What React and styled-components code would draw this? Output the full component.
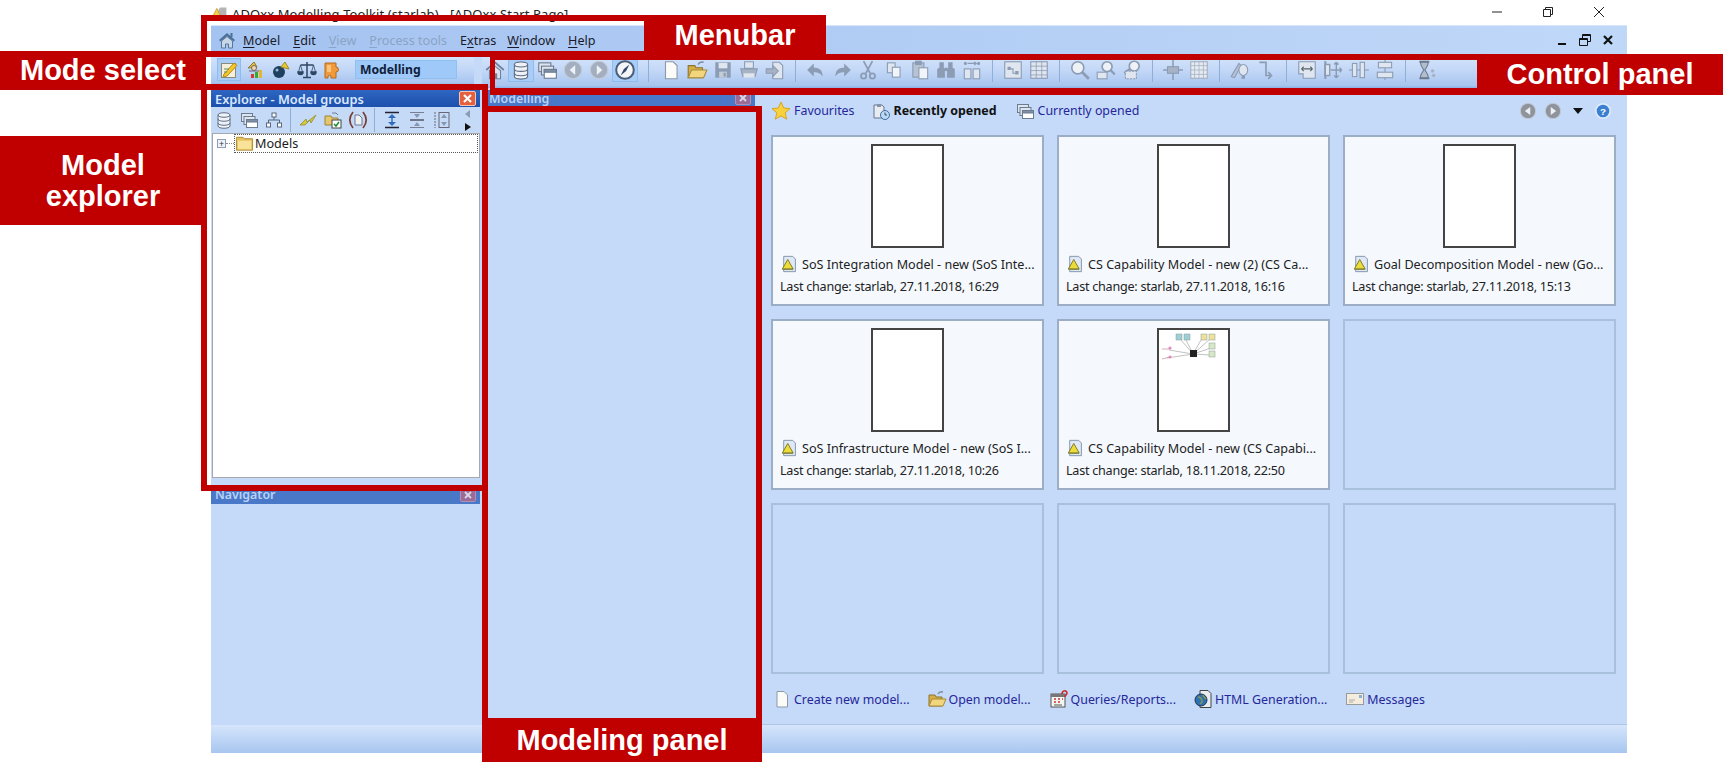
import React from "react";
import styled, { createGlobalStyle } from "styled-components";

const GlobalStyle = createGlobalStyle`
  html, body { margin: 0; padding: 0; background: #fff; }
  body { font-family: "Noto Sans", "Liberation Sans", sans-serif; font-size: 13px; }
`;

const RED = "#c00000";
const PANEL = "#c4daf8";

const Page = styled.div`
  position: relative;
  width: 1723px;
  height: 776px;
  overflow: hidden;
  background: #fff;
`;

const TitleBar = styled.div`
  height: 25px;
  display: flex;
  align-items: center;
  padding: 3px 0 0 212px;
  box-sizing: border-box;
`;

const TitleText = styled.span`
  margin-left: 4px;
  font-size: 13px;
  color: #222;
  letter-spacing: 0.1px;
`;

const WinControls = styled.div`
  margin-left: auto;
  display: flex;
  padding-right: 116px;
  gap: 35px;
`;

const WinGlyph = styled.svg`
  width: 16px;
  height: 16px;
  margin-top: -4px;
`;

const Window = styled.div`
  margin-left: 211px;
  width: 1416px;
  height: 728px;
  display: flex;
  flex-direction: column;
  background: ${PANEL};
`;

const MenuBar = styled.div`
  height: 32px;
  flex: none;
  display: flex;
  align-items: center;
  padding: 0 6px 3px 6px;
  box-sizing: border-box;
  background: linear-gradient(to right, #a5c3f1, #c0d8f8);
  border-top: 1px solid #d8e6fb;
`;

const MenuItem = styled.span`
  font-size: 12.6px;
  margin-left: ${(p) => p.$gap || 13}px;
  color: ${(p) => (p.$off ? "#8ba3c4" : "#1a1a2a")};
  u { text-underline-offset: 2px; }
`;

const MdiButtons = styled.div`
  margin-left: auto;
  display: flex;
  gap: 7px;
  padding-right: 5px;
`;

const ToolRow = styled.div`
  height: 33px;
  flex: none;
  display: flex;
  align-items: flex-start;
`;

const barFill = `linear-gradient(to bottom, #d2e2fa 0%, #c2d7f7 45%, #a8c5ef 92%, #8fb0e0 100%)`;

const ModeBar = styled.div`
  width: 263px;
  height: 28px;
  flex: none;
  display: flex;
  align-items: center;
  gap: 2px;
  padding: 0 0 3px 6px;
  box-sizing: border-box;
  background: ${barFill};
`;

const ControlBar = styled.div`
  margin-left: 8px;
  flex: 1;
  height: 31px;
  display: flex;
  align-items: center;
  padding-bottom: 5px;
  box-sizing: border-box;
  background: ${barFill};
`;

const ToolButton = styled.div`
  width: ${(p) => p.$w || 26}px;
  height: 23px;
  flex: none;
  display: flex;
  align-items: center;
  justify-content: center;
  box-sizing: border-box;
  background: ${(p) => (p.$active ? "#a9cdf6" : "transparent")};
  border: 1px solid ${(p) => (p.$active ? "#8dbdf0" : "transparent")};
`;

const Sep = styled.div`
  width: 1px;
  height: 24px;
  flex: none;
  margin: 0 ${(p) => p.$r ?? 7}px 0 ${(p) => p.$l ?? 7}px;
  background: #8fafd8;
`;

const ModeCombo = styled.div`
  margin-left: 8px;
  width: 102px;
  height: 19px;
  box-sizing: border-box;
  display: flex;
  align-items: center;
  padding-left: 4px;
  font-size: 12.2px;
  font-weight: 700;
  color: #10203a;
  background: #9fc9f8;
  border: 1px solid #8fc0ee;
`;

const Body = styled.div`
  flex: 1;
  min-height: 0;
  display: flex;
`;

const LeftColumn = styled.div`
  width: 269px;
  flex: none;
  display: flex;
  flex-direction: column;
`;

const PanelTitle = styled.div`
  height: ${(p) => p.$h || 16}px;
  flex: none;
  display: flex;
  align-items: center;
  justify-content: space-between;
  padding: 0 4px 0 ${(p) => p.$pl ?? 4}px;
  box-sizing: border-box;
  font-size: ${(p) => (p.$active ? 12.8 : 12.4)}px;
  font-weight: 600;
  background: ${(p) =>
    p.$active ? "linear-gradient(to bottom, #2e66c0, #1d50ad)" : "#4a78c8"};
  color: ${(p) => (p.$active ? "#d9e8ff" : "#b9d2f5")};
`;

const CloseBox = styled.div`
  width: ${(p) => (p.$active ? 17 : 16)}px;
  height: ${(p) => (p.$active ? 15 : 14)}px;
  display: flex;
  align-items: center;
  justify-content: center;
  border-radius: 2px;
  box-sizing: border-box;
  background: ${(p) => (p.$active ? "#e5603e" : "#9a6b97")};
  border: 1px solid ${(p) => (p.$active ? "#f5c7b6" : "#b38fb5")};
`;

const ExplorerTools = styled.div`
  height: 26px;
  flex: none;
  display: flex;
  align-items: center;
  background: #c5daf7;
`;

const OverflowArrows = styled.div`
  margin-left: 8px;
  width: 12px;
  display: flex;
  flex-direction: column;
  gap: 5px;
  align-items: center;
`;

const Tree = styled.div`
  height: 345px;
  flex: none;
  margin: 0 0 7px 1px;
  box-sizing: border-box;
  background: #fff;
  border: 1px solid #a6a8ad;
  padding: 0 1px 0 4px;
`;

const TreeRow = styled.div`
  display: flex;
  align-items: center;
  height: 19px;
`;

const TreeLine = styled.div`
  width: 8px;
  border-top: 1px dotted #888;
`;

const TreePlus = styled.div`
  width: 9px;
  height: 9px;
  flex: none;
  box-sizing: border-box;
  border: 1px solid #8d9bb5;
  font-size: 9px;
  line-height: 7px;
  text-align: center;
  color: #334;
  background: #eef2fa;
`;

const TreeLabel = styled.div`
  flex: 1;
  height: 19px;
  display: flex;
  align-items: center;
  gap: 1px;
  border: 1px dotted #555;
  box-sizing: border-box;
  font-size: 12.6px;
  color: #1a1a1a;
`;

const ModelColumn = styled.div`
  margin-left: 8px;
  width: 267px;
  flex: none;
`;

const StartPage = styled.div`
  margin-left: 5px;
  flex: 1;
  min-width: 0;
  display: flex;
  flex-direction: column;
  padding: 0 13px 0 11px;
`;

const TabRow = styled.div`
  height: 45px;
  flex: none;
  display: flex;
  align-items: center;
  padding-bottom: 4px;
  box-sizing: border-box;
`;

const Tab = styled.div`
  display: flex;
  align-items: center;
  gap: 3px;
  margin-left: ${(p) => p.$gap || 0}px;
  font-size: 12.4px;
  font-weight: ${(p) => (p.$on ? 700 : 400)};
  color: ${(p) => (p.$on ? "#111" : "#26269a")};
`;

const PagerTools = styled.div`
  margin-left: auto;
  display: flex;
  align-items: center;
  gap: 7px;
  padding-right: 2px;
`;

const PagerCaret = styled.svg`
  margin: 0 4px;
`;

const CardGrid = styled.div`
  display: grid;
  grid-template-columns: repeat(3, 273px);
  grid-auto-rows: 171px;
  column-gap: 13px;
  row-gap: 13px;
`;

const Card = styled.div`
  box-sizing: border-box;
  border: 2px solid ${(p) => (p.$empty ? "#a9c0dc" : "#9cadc6")};
  background: ${(p) => (p.$empty ? PANEL : "#f5f9fe")};
  display: flex;
  flex-direction: column;
  align-items: center;
  padding-top: 7px;
`;

const Thumb = styled.div`
  width: 73px;
  height: 104px;
  flex: none;
  box-sizing: border-box;
  border: 2px solid #444;
  background: #fff;
`;

const CardName = styled.div`
  align-self: stretch;
  display: flex;
  align-items: center;
  gap: 3px;
  margin-top: 8px;
  padding-left: 8px;
  height: 16px;
  font-size: 12.6px;
  color: #222;
  white-space: nowrap;
`;

const CardDate = styled.div`
  align-self: stretch;
  margin-top: 7px;
  padding-left: 7px;
  font-size: 12.6px;
  letter-spacing: -0.25px;
  line-height: 16px;
  color: #222;
  white-space: nowrap;
`;

const LinkRow = styled.div`
  flex: none;
  height: 52px;
  margin: 0 -13px 0 -11px;
  padding: 0 0 0 12px;
  box-sizing: border-box;
  display: flex;
  align-items: center;
  border-bottom: 2px solid #aec6e6;
`;

const FootLink = styled.div`
  display: flex;
  align-items: center;
  gap: 2px;
  margin-right: ${(p) => p.$mr}px;
  font-size: 12.4px;
  color: #26269a;
  white-space: nowrap;
`;

const StatusBar = styled.div`
  height: 28px;
  flex: none;
  background: linear-gradient(to bottom, #d5e5fb, #a8c6f0);
`;

/* annotations lying over the screenshot */
const MenubarFrame = styled.div`
  position: absolute;
  left: 201px;
  top: 15px;
  width: 450px;
  height: 42px;
  box-sizing: border-box;
  border: 6px solid ${RED};
`;

const ExplorerFrame = styled.div`
  position: absolute;
  left: 201px;
  top: 84px;
  width: 287px;
  height: 407px;
  box-sizing: border-box;
  border: 6px solid ${RED};
`;

const ControlFrame = styled.div`
  position: absolute;
  left: 490px;
  top: 54px;
  width: 995px;
  height: 41px;
  box-sizing: border-box;
  border: solid ${RED};
  border-width: 6px 6px 7px 5px;
`;

const ModelingFrame = styled.div`
  position: absolute;
  left: 482px;
  top: 106px;
  width: 280px;
  height: 620px;
  box-sizing: border-box;
  border: 6px solid ${RED};
`;

const Callout = styled.div`
  position: absolute;
  left: ${(p) => p.$x}px;
  top: ${(p) => p.$y}px;
  width: ${(p) => p.$w}px;
  height: ${(p) => p.$h}px;
  display: flex;
  align-items: center;
  justify-content: center;
  text-align: center;
  background: ${RED};
  color: #fff;
  font: 700 29px/31px "Liberation Sans", Arial, sans-serif;
`;

const G = "#8b9cb4";
const GL = "#dfe6f0";

const ICONS = {
  home: (
    <>
      <path d="M2 10 10 3l8 7-1.5 1.5L10 6l-6.5 5.5z" fill="#4c6f96" />
      <path d="M4.5 11 10 6.5l5.5 4.5v7h-4v-4h-3v4h-4z" fill="#c9d6e6" stroke="#55789e" />
      <rect x="13.5" y="3" width="2" height="4" fill="#4c6f96" />
    </>
  ),
  pencil: (
    <>
      <rect x="2.5" y="3.5" width="14" height="14" fill="#f6efdc" stroke="#8a8a78" />
      <path d="M5 14 15 3l3 2.5L8 16l-4 1z" fill="#f3c62c" stroke="#b78c18" />
      <path d="M5 9h5M5 12h3" stroke="#5b8f5b" />
    </>
  ),
  chartHat: (
    <>
      <path d="M3 8 9 2l3 5z" fill="#e4c24a" stroke="#8e7a28" />
      <circle cx="9" cy="8" r="2.5" fill="#f0d9b5" stroke="#765" />
      <path d="M4 11h12" stroke="#667" />
      <rect x="6" y="14" width="3" height="4" fill="#d33" />
      <rect x="10" y="12" width="3" height="6" fill="#3a3" />
      <rect x="14" y="10" width="3" height="8" fill="#e3b72b" />
    </>
  ),
  ballTri: (
    <>
      <circle cx="8" cy="12" r="6" fill="#20405f" />
      <circle cx="6" cy="10" r="1.5" fill="#9db9d4" />
      <path d="M10 7 14 2l4 7z" fill="#e8c93a" stroke="#a08a20" />
    </>
  ),
  scale: (
    <g fill="none" stroke="#2e4763" strokeWidth="1.5">
      <path d="M10 2v15M6 17.5h8M3.5 5h13" />
      <path d="M1 12a2.5 2.5 0 0 0 5 0zM14 12a2.5 2.5 0 0 0 5 0z" fill="#2e4763" />
      <path d="M3.5 5 1.5 12M3.5 5l2 7M16.5 5l-2 7M16.5 5l2 7" strokeWidth="0.8" />
    </g>
  ),
  puzzle: (
    <>
      <path d="M2 3h11v4a2.5 2.5 0 0 1 0 5v6H8v-2a2 2 0 0 0-3 0v2H2z" fill="#f09a3a" stroke="#b66b1c" />
      <path d="M4 5h4v7H4z" fill="#f8c37b" />
    </>
  ),
  db: (
    <g fill="#eef2f7" stroke="#5f6f84">
      <path d="M4 5c0-3 12-3 12 0v11c0 3-12 3-12 0z" />
      <path d="M4 5c0 3 12 3 12 0M4 9c0 3 12 3 12 0M4 13c0 3 12 3 12 0" fill="none" />
    </g>
  ),
  stack: (
    <g stroke="#6c7b90" fill="#dde5ef">
      <rect x="2.5" y="3.5" width="11" height="8" />
      <rect x="5" y="6.5" width="11" height="8" />
      <rect x="7.5" y="9.5" width="11" height="8" fill="#fff" />
      <rect x="7.5" y="9.5" width="11" height="2.5" fill="#7d8ea6" />
    </g>
  ),
  org: (
    <g stroke="#56677f" fill="#fff">
      <rect x="8" y="3" width="4" height="4" />
      <rect x="2.5" y="13" width="4" height="4" />
      <rect x="13.5" y="13" width="4" height="4" />
      <path d="M10 7v3M4.5 13v-3h11v3" fill="none" />
    </g>
  ),
  zig: <path d="M2 15 8 9l1 3 9-7-5 8-1-3-5 5z" fill="#d7c83a" stroke="#8a8520" strokeWidth="0.7" />,
  folderCheck: (
    <>
      <path d="M2 6h6l1 2h6v7H2z" fill="#e6c66a" stroke="#9b8339" />
      <rect x="9" y="10" width="9" height="8" fill="#fff" stroke="#444" />
      <path d="M11 14l2 2 3-4" stroke="#1c8a2c" strokeWidth="1.5" fill="none" />
      <path d="M9 3h4l2 2" stroke="#6b7d93" fill="none" />
    </>
  ),
  parenDoc: (
    <>
      <path d="M5 2C1 7 1 13 5 18M15 2c4 5 4 11 0 16" stroke="#7a3b33" strokeWidth="1.7" fill="none" />
      <path d="M7 5h4l3 3v7H7z" fill="#eef1f5" stroke="#6b7788" />
    </>
  ),
  expand: (
    <g stroke="#223" fill="#2f6cc0">
      <path d="M3 2.5h14M3 17.5h14" fill="none" strokeWidth="1.5" />
      <path d="M10 4 6 8h8zM10 16l-4-4h8z" stroke="none" />
      <path d="M10 7v6" fill="none" stroke="#2f6cc0" strokeWidth="1.5" />
    </g>
  ),
  collapse: (
    <g stroke="#556" fill="#8696ad">
      <path d="M3 10h14" fill="none" strokeWidth="1.5" />
      <path d="M10 8 7 4h6zM10 12l-3 4h6z" stroke="none" />
      <path d="M3 2.5h14M3 17.5h14" fill="none" strokeWidth="0.7" />
    </g>
  ),
  level: (
    <g stroke="#667" fill="#8696ad">
      <path d="M3 2v16" strokeDasharray="2 1" fill="none" />
      <rect x="7" y="2.5" width="10" height="15" fill="none" />
      <path d="M12 4l-3 4h6zM12 16l-3-4h6z" stroke="none" />
    </g>
  ),
  homeGrey: (
    <>
      <path d="M2 10 10 3l8 7" fill="none" stroke="#6f829c" strokeWidth="1.6" />
      <path d="M5 10.5 10 6.5l5 4V18H5z" fill="#dbe3ee" stroke="#6f829c" />
      <rect x="9" y="13" width="3" height="5" fill="#6f829c" />
    </>
  ),
  back: (
    <>
      <circle cx="10" cy="10" r="8" fill="#a3afc0" stroke="#c3ccd9" />
      <path d="M12 5.5 7 10l5 4.5z" fill="#eef2f6" />
    </>
  ),
  fwd: (
    <>
      <circle cx="10" cy="10" r="8" fill="#a3afc0" stroke="#c3ccd9" />
      <path d="M8 5.5 13 10l-5 4.5z" fill="#eef2f6" />
    </>
  ),
  compass: (
    <>
      <circle cx="10" cy="10" r="8" fill="#f3f5f8" stroke="#4a5d78" strokeWidth="1.8" />
      <path d="M14 5 11 11l-5 4 3-6z" fill="#31486a" />
    </>
  ),
  doc: <path d="M5 2.5h7l3.5 3.5v12H5z" fill="#fbfbf7" stroke="#8d99aa" />,
  open: (
    <>
      <path d="M2 6h6l1 2h6v9H2z" fill="#d8ae42" stroke="#8c7430" />
      <path d="M5 10h14l-3 7H2z" fill="#f2d57c" stroke="#a68d3c" />
      <path d="M11 5c1-2 3-2.5 5-2" stroke="#7c8ba0" fill="none" strokeWidth="1.4" />
    </>
  ),
  save: (
    <>
      <path d="M3 3h14v14H3z" fill={G} />
      <rect x="6" y="3.5" width="8" height="5" fill={GL} />
      <rect x="6.5" y="11.5" width="7" height="5.5" fill="#c2ccd9" />
      <rect x="10.5" y="12.5" width="2" height="3.5" fill={G} />
    </>
  ),
  print: (
    <>
      <path d="M6 2.5h8v6H6z" fill={GL} stroke={G} />
      <path d="M2.5 9h15l-2 7h-11z" fill="#a7b3c4" stroke={G} />
      <rect x="5" y="13" width="10" height="4" fill={GL} />
    </>
  ),
  exportDoc: (
    <>
      <path d="M8 3h6l3 3v12H8z" fill={GL} stroke={G} />
      <path d="M2 9h6V6l5 5-5 5v-3H2z" fill="#a7b3c4" stroke={G} />
    </>
  ),
  undo: <path d="M8 4 2 10l6 6v-4c4 0 6 1 8 4 0-6-3-8-8-8z" fill={G} />,
  redo: <path d="M12 4l6 6-6 6v-4c-4 0-6 1-8 4 0-6 3-8 8-8z" fill={G} />,
  cut: (
    <g stroke={G} fill="none" strokeWidth="1.6">
      <path d="M6 2l6 11M14 2 8 13" />
      <circle cx="6" cy="15.5" r="2.4" />
      <circle cx="14" cy="15.5" r="2.4" />
    </g>
  ),
  copy: (
    <g fill={GL} stroke={G}>
      <rect x="4" y="3.5" width="7" height="9" />
      <rect x="8.5" y="7.5" width="7" height="9" fill="#f1f4f8" />
    </g>
  ),
  paste: (
    <g stroke={G}>
      <rect x="3.5" y="3.5" width="10" height="13" fill="#b7c2d2" />
      <rect x="6" y="2" width="5" height="3" fill={G} />
      <rect x="9" y="8" width="8" height="10" fill="#f1f4f8" />
    </g>
  ),
  bino: (
    <g fill={G}>
      <path d="M4 3h4v5l1 1v8H2v-8l2-1zM12 3h4v5l2 1v8h-7V9l1-1z" />
      <rect x="8.5" y="8" width="3" height="3" />
    </g>
  ),
  replace: (
    <g fill={G}>
      <circle cx="4" cy="4" r="1.4" />
      <circle cx="16" cy="4" r="1.4" />
      <path d="M6 4h8M12 2.5 14 4l-2 1.5" stroke={G} fill="none" />
      <rect x="3" y="9" width="6" height="9" fill={GL} stroke={G} />
      <rect x="11" y="9" width="6" height="9" fill={GL} stroke={G} />
    </g>
  ),
  picture: (
    <>
      <rect x="2.5" y="2.5" width="15" height="15" fill={GL} stroke={G} />
      <path d="M5 7h3v3H5zM12 11h3v3h-3z" fill={G} />
      <path d="M8 9h2v4h2" stroke={G} fill="none" />
    </>
  ),
  table: (
    <g stroke={G} fill={GL}>
      <rect x="2.5" y="2.5" width="15" height="15" />
      <path d="M2.5 6.5h15M2.5 10.5h15M2.5 14.5h15M7.5 2.5v15M12.5 2.5v15" fill="none" strokeWidth="0.7" />
    </g>
  ),
  zoom: (
    <>
      <circle cx="8" cy="8" r="5.5" fill="#eef2f6" stroke={G} strokeWidth="1.5" />
      <path d="M12 12l6 6" stroke={G} strokeWidth="2.5" />
    </>
  ),
  zoomFit: (
    <>
      <circle cx="11" cy="7" r="4.5" fill="#eef2f6" stroke={G} strokeWidth="1.5" />
      <path d="M14 10l4 4" stroke={G} strokeWidth="2" />
      <rect x="2" y="12" width="9" height="6" fill={GL} stroke={G} />
    </>
  ),
  zoomBox: (
    <>
      <circle cx="12" cy="6.5" r="4.5" fill="#eef2f6" stroke={G} strokeWidth="1.5" />
      <path d="M8 9 3 13" stroke={G} strokeWidth="2" />
      <rect x="4" y="11" width="10" height="7" fill={GL} stroke={G} strokeDasharray="2 1" />
    </>
  ),
  cross: (
    <>
      <path d="M1 10h18M10 1v18" stroke={G} strokeWidth="1.4" />
      <rect x="5" y="7" width="10" height="6" fill="#a7b3c4" stroke={G} />
    </>
  ),
  grid: (
    <g stroke="#a3afbf" fill="#e6ebf2">
      <rect x="2.5" y="2.5" width="15" height="15" />
      <path d="M6 2.5v15M10 2.5v15M14 2.5v15M2.5 6h15M2.5 10h15M2.5 14h15" fill="none" strokeWidth="0.7" />
    </g>
  ),
  pen: (
    <>
      <path d="M2 16 9 4l2 2-6 11z" fill="#b7c2d2" stroke={G} />
      <ellipse cx="13" cy="10" rx="4" ry="5" fill={GL} stroke={G} />
      <rect x="11.5" y="15" width="3" height="3" fill={G} />
    </>
  ),
  elbow: <path d="M4 3h6v12h5m-3-3 3 3-3 3" stroke={G} strokeWidth="1.5" fill="none" />,
  boxArrow: (
    <>
      <path d="M2.5 2.5h15v15h-11v-4h-4z" fill={GL} stroke={G} />
      <path d="M5 9h10M5 9l2-2M5 9l2 2M15 9l-2-2M15 9l-2 2" stroke="#566" fill="none" />
    </>
  ),
  alignMove: (
    <g stroke={G} fill="none" strokeWidth="1.3">
      <path d="M3 2v16" strokeWidth="2" />
      <rect x="3" y="5" width="4" height="10" fill={GL} />
      <path d="M13 3v14M8 10h10M13 3l-2 2M13 3l2 2M13 17l-2-2M13 17l2-2M18 10l-2-2M18 10l-2 2" />
    </g>
  ),
  alignV: (
    <g stroke={G} fill={GL}>
      <path d="M1 10h18" />
      <rect x="4" y="4" width="4" height="12" />
      <rect x="11" y="3" width="4" height="14" />
    </g>
  ),
  alignH: (
    <g stroke={G} fill={GL}>
      <path d="M10 1v18" />
      <rect x="4" y="3" width="12" height="5" />
      <rect x="3" y="12" width="14" height="5" />
    </g>
  ),
  hourglass: (
    <>
      <path d="M4 2.5h9M4 17.5h9" stroke="#6b7a8f" strokeWidth="2" />
      <path d="M5 3h7c0 4-2 5-3 7 1 2 3 3 3 7H5c0-4 2-5 3-7-1-2-3-3-3-7z" fill="#b2bdcc" stroke="#6b7a8f" />
      <circle cx="16" cy="11" r="1.6" fill="#a7b3c4" />
      <circle cx="17" cy="15" r="1.6" fill="#a7b3c4" />
    </>
  ),
  folder: (
    <>
      <path d="M1.5 5V3.5h7L10 5h8.5v12h-17z" fill="#e8c25a" stroke="#a68a3a" />
      <rect x="3" y="7" width="14" height="9" fill="#f9e39b" />
    </>
  ),
  star: <path d="M10 1l2.7 6 6.3.6-4.8 4.2 1.5 6.4L10 14.8l-5.7 3.4 1.5-6.4L1 7.6 7.3 7z" fill="#f8d13c" stroke="#d9a520" />,
  recent: (
    <>
      <path d="M3 4h8l2 2v11H3z" fill="#e8ecf2" stroke="#66758b" />
      <path d="M6 3h4v3H6z" fill="#8493a8" />
      <circle cx="14" cy="14" r="4.5" fill="#bcd8f4" stroke="#3f6e9e" />
      <path d="M14 11.5V14h2" stroke="#2c5177" fill="none" />
    </>
  ),
  modelDoc: (
    <>
      <path d="M3 1.5h10l3 3v14H3z" fill="#dfe8f4" stroke="#7c8ea8" />
      <path d="M1.5 15.5 7.5 5l6 10.5z" fill="#ecdc3a" stroke="#77701c" />
      <path d="M1.5 16h12" stroke="#8a8a50" strokeWidth="1.4" />
    </>
  ),
  query: (
    <>
      <rect x="2" y="5" width="14" height="13" fill="#f4f4f0" stroke="#555" />
      <rect x="2" y="5" width="14" height="3" fill="#777" />
      <path d="M5 10h2M9 10h2M13 10h1M5 13h2M9 13h2" stroke="#c33" strokeWidth="1.4" />
      <path d="M5 16h8" stroke="#555" />
      <path d="M13 5c0-4 5-4 5-1 0 2-2 2-2 4" stroke="#c22" strokeWidth="1.5" fill="none" />
    </>
  ),
  html: (
    <>
      <path d="M7 1.5h8l3 3v14H7z" fill="#e9edf2" stroke="#444" />
      <circle cx="8" cy="11" r="6" fill="#2f6fb4" stroke="#234" />
      <path d="M5 8c2 0 3 1 4 3s-1 3-2 4M10 6c0 2 2 2 3 4" stroke="#8a9a4c" strokeWidth="1.4" fill="none" />
    </>
  ),
  mail: (
    <>
      <rect x="1.5" y="4.5" width="17" height="11" fill="#f4ecdc" stroke="#9a9a9a" />
      <rect x="14" y="6" width="3" height="3" fill="#8db0d8" />
      <path d="M4 11h6M4 13h4" stroke="#aaa" />
    </>
  ),
  pagerBack: (
    <>
      <circle cx="10" cy="10" r="8.5" fill="#8e939c" stroke="#c6cbd2" />
      <path d="M12.5 5.5 6.5 10l6 4.5z" fill="#eef0f3" />
    </>
  ),
  pagerFwd: (
    <>
      <circle cx="10" cy="10" r="8.5" fill="#8e939c" stroke="#c6cbd2" />
      <path d="M7.5 5.5 13.5 10l-6 4.5z" fill="#eef0f3" />
    </>
  ),
  help: (
    <>
      <circle cx="10" cy="10" r="8" fill="#3b7fd0" stroke="#dce9fa" strokeWidth="2" />
      <text x="10" y="14" textAnchor="middle" fontSize="11" fontWeight="700" fill="#fff" fontFamily="Liberation Sans">?</text>
    </>
  ),
  appLogo: (
    <>
      <path d="M10 2h8v16H3v-4z" fill="#b4b4b4" />
      <path d="M1 13 6 3l5 10z" fill="#f3cf55" stroke="#c49b22" />
    </>
  ),
};

const Icon = ({ name, size = 20 }) => (
  <svg width={size} height={size} viewBox="0 0 20 20" style={{ flex: "none" }}>
    {ICONS[name]}
  </svg>
);

const CONTROL_GROUPS = [
  [["homeGrey"], ["db", true], ["stack"], ["back"], ["fwd"], ["compass", true]],
  [["doc"], ["open"], ["save"], ["print"], ["exportDoc"]],
  [["undo"], ["redo"], ["cut"], ["copy"], ["paste"], ["bino"], ["replace"]],
  [["picture"], ["table"]],
  [["zoom"], ["zoomFit"], ["zoomBox"]],
  [["cross"], ["grid"]],
  [["pen"], ["elbow"]],
  [["boxArrow"], ["alignMove"], ["alignV"], ["alignH"]],
  [["hourglass"]],
];

const CARDS = [
  { name: "SoS Integration Model - new (SoS Inte...", date: "27.11.2018, 16:29" },
  { name: "CS Capability Model - new (2) (CS Ca...", date: "27.11.2018, 16:16" },
  { name: "Goal Decomposition Model - new (Go...", date: "27.11.2018, 15:13" },
  { name: "SoS Infrastructure Model - new (SoS I...", date: "27.11.2018, 10:26" },
  { name: "CS Capability Model - new (CS Capabi...", date: "18.11.2018, 22:50", diagram: true },
  null,
  null,
  null,
  null,
];

const LINKS = [
  ["doc", "Create new model...", 17],
  ["open", "Open model...", 18],
  ["query", "Queries/Reports...", 17],
  ["html", "HTML Generation...", 18],
  ["mail", "Messages", 0],
];

const MiniDiagram = () => (
  <svg width="69" height="40" viewBox="0 0 69 40">
    <g stroke="#999" strokeWidth="0.6" fill="none">
      <path d="M34 24 22 10M34 24 27 10M34 24 42 10M34 24 50 10M34 24 52 18M34 24 52 25M34 24 10 20M34 24 8 28" />
    </g>
    <g stroke="#8a9a9a" strokeWidth="0.5">
      <rect x="17" y="4" width="6" height="6" fill="#9ecfd4" />
      <rect x="25" y="4" width="6" height="6" fill="#9ecfd4" />
      <rect x="42" y="4" width="6" height="6" fill="#ece29c" />
      <rect x="50" y="4" width="6" height="6" fill="#ece29c" />
      <rect x="50" y="13" width="6" height="6" fill="#d7e8c4" />
      <rect x="50" y="21" width="6" height="6" fill="#d7e8c4" />
    </g>
    <circle cx="11" cy="18" r="1.6" fill="#e58ac0" />
    <circle cx="11" cy="27" r="1.6" fill="#e58ac0" />
    <path d="M3 19h8M3 29l8-2" stroke="#c9a" strokeWidth="0.8" />
    <rect x="31" y="20" width="7" height="7" fill="#222" />
  </svg>
);

const App = () => (
  <Page>
    <GlobalStyle />
    <TitleBar>
      <Icon name="appLogo" size={16} />
      <TitleText>ADOxx Modelling Toolkit (starlab) - [ADOxx Start Page]</TitleText>
      <WinControls>
        <WinGlyph viewBox="0 0 16 16"><path d="M3 8h10" stroke="#222" /></WinGlyph>
        <WinGlyph viewBox="0 0 16 16"><path d="M3.5 5.5h7v7h-7zM5.5 5.5v-2h7v7h-2" stroke="#222" fill="none" /></WinGlyph>
        <WinGlyph viewBox="0 0 16 16"><path d="M3 3l10 10M13 3 3 13" stroke="#222" /></WinGlyph>
      </WinControls>
    </TitleBar>
    <Window>
      <MenuBar>
        <Icon name="home" />
        <MenuItem $gap={6}><u>M</u>odel</MenuItem>
        <MenuItem><u>E</u>dit</MenuItem>
        <MenuItem $off><u>V</u>iew</MenuItem>
        <MenuItem $off><u>P</u>rocess tools</MenuItem>
        <MenuItem>E<u>x</u>tras</MenuItem>
        <MenuItem $gap={11}><u>W</u>indow</MenuItem>
        <MenuItem><u>H</u>elp</MenuItem>
        <MdiButtons>
          <svg width="16" height="16" viewBox="0 0 16 16"><path d="M4 12h8" stroke="#111" strokeWidth="2" /></svg>
          <svg width="16" height="16" viewBox="0 0 16 16"><path d="M2.5 6.5h8v7h-8zM5.5 6V2.5h8v7H11M2.5 7.5h8M5.5 3.5h8" stroke="#111" fill="none" /></svg>
          <svg width="16" height="16" viewBox="0 0 16 16"><path d="M4 4l8 8M12 4l-8 8" stroke="#111" strokeWidth="2.2" /></svg>
        </MdiButtons>
      </MenuBar>
      <ToolRow>
        <ModeBar>
          <ToolButton $w={24} $active><Icon name="pencil" /></ToolButton>
          {["chartHat", "ballTri", "scale", "puzzle"].map((n) => (
            <ToolButton $w={24} key={n}><Icon name={n} /></ToolButton>
          ))}
          <ModeCombo>Modelling</ModeCombo>
        </ModeBar>
        <ControlBar>
          {CONTROL_GROUPS.map((group, i) => (
            <React.Fragment key={i}>
              {i > 0 && (i === 1 ? <Sep $l={10} $r={9} /> : <Sep />)}
              {group.map(([n, on]) => (
                <ToolButton key={n} $active={on}><Icon name={n} size={22} /></ToolButton>
              ))}
            </React.Fragment>
          ))}
        </ControlBar>
      </ToolRow>
      <Body>
        <LeftColumn>
          <PanelTitle $active $h={17}>
            Explorer - Model groups
            <CloseBox $active>
              <svg width="11" height="11" viewBox="0 0 11 11"><path d="M2 2l7 7M9 2 2 9" stroke="#fff" strokeWidth="2.2" /></svg>
            </CloseBox>
          </PanelTitle>
          <ExplorerTools>
            <ToolButton $w={25}><Icon name="db" /></ToolButton>
            <ToolButton $w={25}><Icon name="stack" /></ToolButton>
            <ToolButton $w={25}><Icon name="org" /></ToolButton>
            <Sep $l={4} $r={4} />
            <ToolButton $w={25}><Icon name="zig" /></ToolButton>
            <ToolButton $w={25}><Icon name="folderCheck" /></ToolButton>
            <ToolButton $w={25}><Icon name="parenDoc" /></ToolButton>
            <Sep $l={4} $r={4} />
            <ToolButton $w={25}><Icon name="expand" /></ToolButton>
            <ToolButton $w={25}><Icon name="collapse" /></ToolButton>
            <ToolButton $w={25}><Icon name="level" /></ToolButton>
            <OverflowArrows>
              <svg width="6" height="8" viewBox="0 0 6 8"><path d="M5 0v8L0 4z" fill="#8b9cb4" /></svg>
              <svg width="6" height="8" viewBox="0 0 6 8"><path d="M0 0v8l6-4z" fill="#111" /></svg>
            </OverflowArrows>
          </ExplorerTools>
          <Tree>
            <TreeRow>
              <TreePlus>+</TreePlus>
              <TreeLine />
              <TreeLabel>
                <Icon name="folder" size={19} />
                Models
              </TreeLabel>
            </TreeRow>
          </Tree>
          <PanelTitle $h={19}>
            Navigator
            <CloseBox>
              <svg width="10" height="10" viewBox="0 0 10 10"><path d="M2 2l6 6M8 2 2 8" stroke="#d8d8e6" strokeWidth="1.8" /></svg>
            </CloseBox>
          </PanelTitle>
        </LeftColumn>
        <ModelColumn>
          <PanelTitle $pl={1}>
            Modelling
            <CloseBox>
              <svg width="10" height="10" viewBox="0 0 10 10"><path d="M2 2l6 6M8 2 2 8" stroke="#d8d8e6" strokeWidth="1.8" /></svg>
            </CloseBox>
          </PanelTitle>
        </ModelColumn>
        <StartPage>
          <TabRow>
            <Tab><Icon name="star" />Favourites</Tab>
            <Tab $gap={16} $on><Icon name="recent" />Recently opened</Tab>
            <Tab $gap={18}><Icon name="stack" />Currently opened</Tab>
            <PagerTools>
              <Icon name="pagerBack" size={18} />
              <Icon name="pagerFwd" size={18} />
              <PagerCaret width="10" height="6" viewBox="0 0 10 6"><path d="M0 0h10L5 6z" fill="#111" /></PagerCaret>
              <Icon name="help" size={18} />
            </PagerTools>
          </TabRow>
          <CardGrid>
            {CARDS.map((c, i) =>
              c ? (
                <Card key={i}>
                  <Thumb>{c.diagram && <MiniDiagram />}</Thumb>
                  <CardName><Icon name="modelDoc" size={18} />{c.name}</CardName>
                  <CardDate>Last change: starlab, {c.date}</CardDate>
                </Card>
              ) : (
                <Card key={i} $empty />
              )
            )}
          </CardGrid>
          <LinkRow>
            {LINKS.map(([icon, text, mr]) => (
              <FootLink key={text} $mr={mr}><Icon name={icon} />{text}</FootLink>
            ))}
          </LinkRow>
        </StartPage>
      </Body>
      <StatusBar />
    </Window>

    <MenubarFrame />
    <ExplorerFrame />
    <ControlFrame />
    <ModelingFrame />
    <Callout $x={644} $y={15} $w={182} $h={41}>Menubar</Callout>
    <Callout $x={0} $y={51} $w={206} $h={39}>Mode select</Callout>
    <Callout $x={1477} $y={54} $w={246} $h={41}>Control panel</Callout>
    <Callout $x={0} $y={136} $w={206} $h={89}>Model<br />explorer</Callout>
    <Callout $x={482} $y={718} $w={280} $h={44}>Modeling panel</Callout>
  </Page>
);

export default App;
